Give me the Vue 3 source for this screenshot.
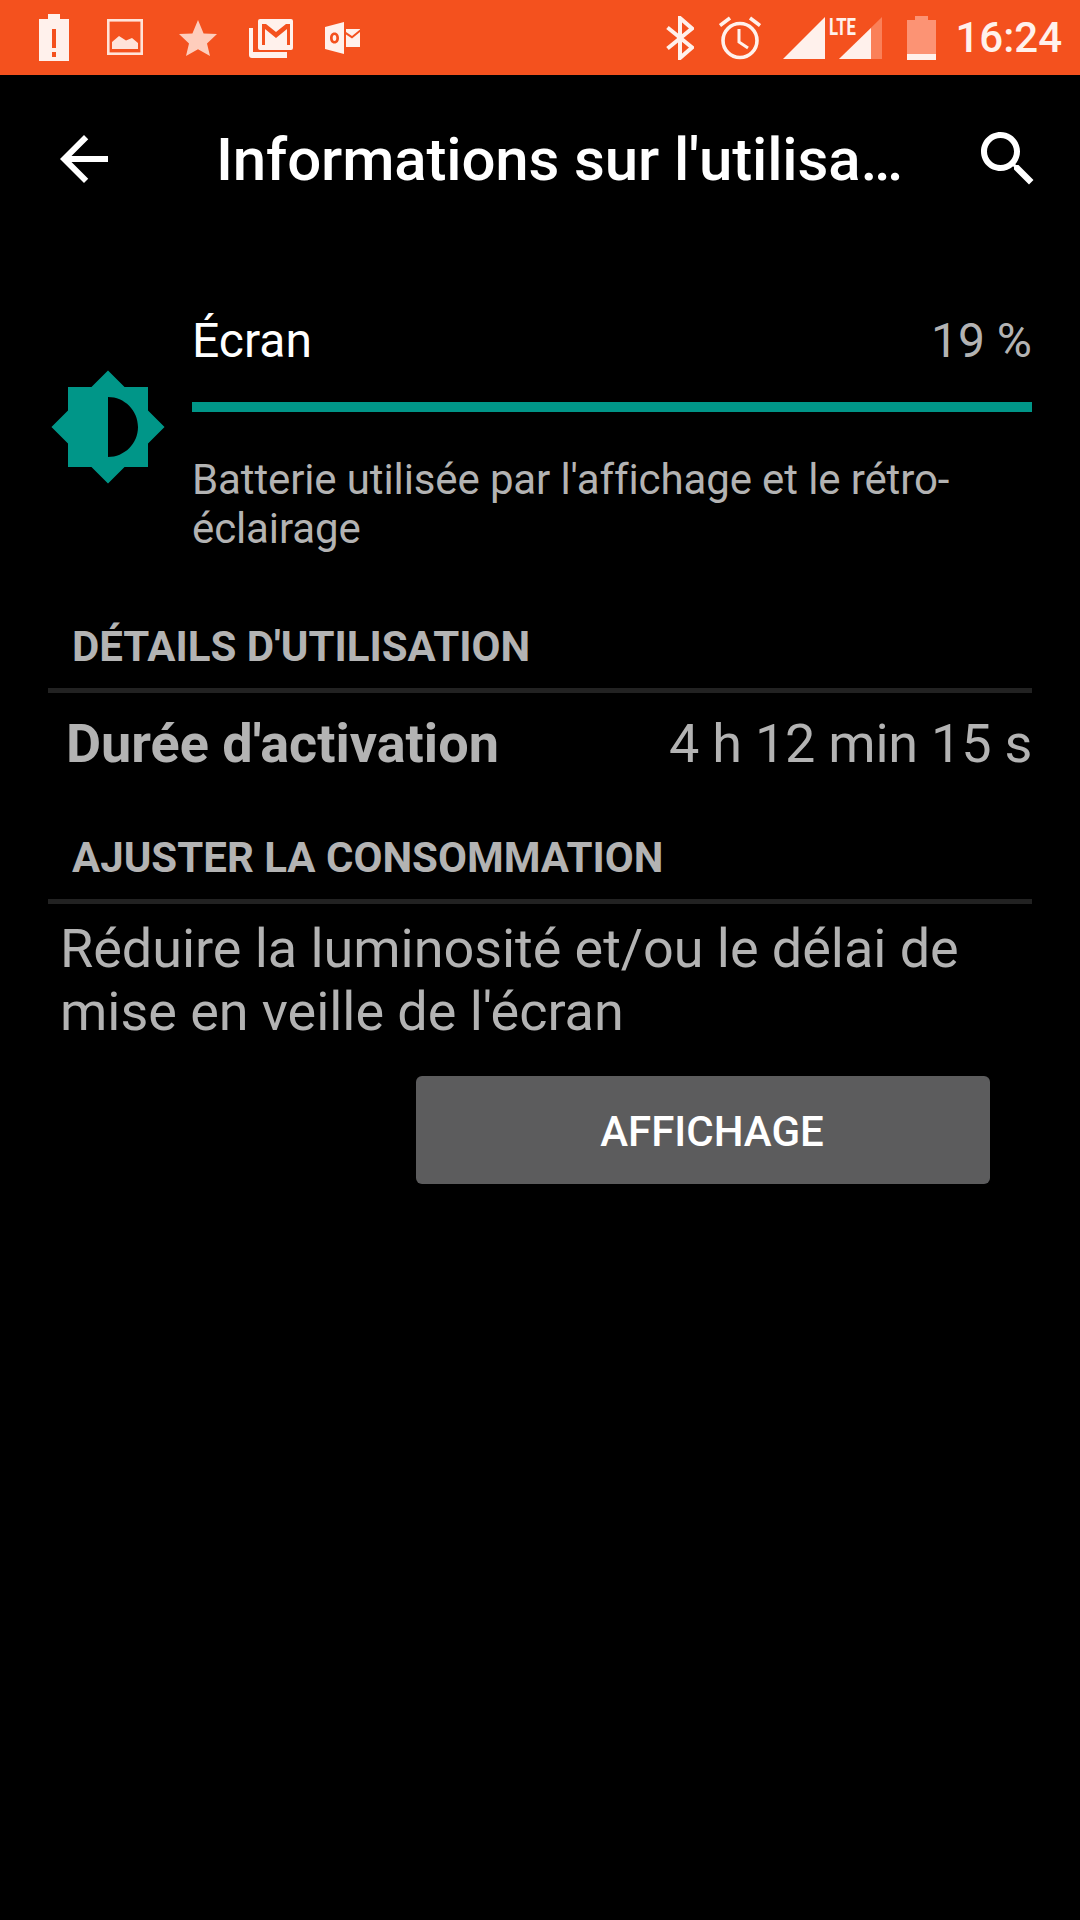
<template>
  <div class="screen">
    <div class="status-bar">
      <div class="status-left">
        <svg class="ic" width="30" height="47" viewBox="0 0 30 47">
          <path fill="#fff1ec" fill-rule="evenodd" d="M9 0h12v5h9v42H0V5h9zM13 15v19h4V15zM13 38v5h4v-5z" />
        </svg>
        <svg class="ic pic" width="36" height="36" viewBox="0 0 36 36">
          <rect x="1.300" y="1.300" width="33.400" height="33.400" fill="none" stroke="#ffe3d9" stroke-width="2.600" />
          <path fill="#ffe3d9" d="M5 30V23l7-6 7 4.500 6-2.500 6 5v6z" />
        </svg>
        <svg class="ic star" width="38" height="36" viewBox="0 0 38 36">
          <path fill="#fecdbc" d="M19 0l5.6 13.4L38 14l-10 9.4L31 36l-12-6.800L7 36l3-12.600L0 14l13.400-.6z" />
        </svg>
        <svg class="ic gmail" width="44" height="39" viewBox="0 0 44 39">
          <path fill="#fff1ec" fill-rule="evenodd" d="M11 0h31q2 0 2 2v27q0 2-2 2H11q-2 0-2-2V2q0-2 2-2zM13 5v21h3V10l11 9 11-9v16h3V5h-4L27 13 17 5z" />
          <path fill="#fff1ec" d="M0 9h4v24h34v6H3q-3 0-3-3z" />
        </svg>
        <svg class="ic outlook" width="35" height="32" viewBox="0 0 35 32">
          <path fill="#fff1ec" fill-rule="evenodd" d="M0 5L19 0v32L0 27zM9.500 10.500c-3 0-4.500 2.500-4.500 5.500s1.500 5.500 4.500 5.500S14 19 14 16s-1.500-5.500-4.500-5.500zM9.500 13c1.200 0 1.800 1.300 1.800 3s-.6 3-1.800 3-1.800-1.300-1.800-3 .6-3 1.800-3z" />
          <path fill="#fff1ec" d="M21 7h14v.6l-8 6.400-6-4zM21 12.500l6 4 8-6.500V25H21z" />
        </svg>
      </div>
      <div class="status-right">
        <svg class="ic bt" width="28" height="44" viewBox="0 0 28 44">
          <path fill="none" stroke="#fff1ec" stroke-width="4" d="M1.500 11.500L26 31.500 14 42V2l12 10.500L1.500 32.500" />
        </svg>
        <svg class="ic alarm" width="42" height="44" viewBox="0 0 42 44">
          <circle cx="21" cy="24.500" r="17" fill="none" stroke="#fff1ec" stroke-width="3.600" />
          <path fill="none" stroke="#fff1ec" stroke-width="3" d="M20 13v13l9 6" />
          <path fill="none" stroke="#fff1ec" stroke-width="3.600" d="M1 9.500L11 2M41 9.500L31 2" />
        </svg>
        <svg class="ic signal" width="99" height="48" viewBox="0 -5 99 48">
          <path fill="#fff1ec" d="M0 42L42 0v42z" />
          <path fill="#fa8058" d="M56 42L99 0v42z" />
          <path fill="#fff1ec" d="M56 42L88 11v31z" />
          <text x="46" y="18" class="lte" textLength="27" lengthAdjust="spacingAndGlyphs">LTE</text>
        </svg>
        <svg class="ic batt" width="29" height="44" viewBox="0 0 29 44">
          <path fill="#fc9374" d="M8 0h13v4h8v34H0V4h8z" />
          <path fill="#fff1ec" d="M0 38h29v6H0z" />
        </svg>
        <span class="clock">16:24</span>
      </div>
    </div>

    <div class="toolbar">
      <svg class="tool-icon back" width="72" height="72" viewBox="0 0 24 24">
        <path fill="#fff" d="M20 11H7.830l5.590-5.590L12 4l-8 8 8 8 1.410-1.410L7.830 13H20v-2z" />
      </svg>
      <div class="title">Informations sur l'utilisa…</div>
      <svg class="tool-icon search" width="72" height="72" viewBox="0 0 24 24">
        <path fill="#fff" d="M15.500 14h-.79l-.28-.27C15.410 12.590 16 11.110 16 9.500 16 5.910 13.090 3 9.500 3S3 5.910 3 9.500 5.910 16 9.500 16c1.610 0 3.090-.59 4.230-1.570l.27.28v.79l5 4.990L20.490 19l-4.990-5zm-6 0C7.010 14 5 11.990 5 9.500S7.010 5 9.500 5 14 7.010 14 9.500 11.990 14 9.500 14z" />
      </svg>
    </div>

    <div class="usage">
      <svg class="sun" width="120" height="120" viewBox="0 0 24 24">
        <path fill="#009688" fill-rule="evenodd" d="M20 8.690V4h-4.690L12 .69 8.690 4H4v4.690L.69 12 4 15.310V20h4.690L12 23.310 15.310 20H20v-4.690L23.310 12 20 8.690zM12 18V6c3.310 0 6 2.690 6 6s-2.690 6-6 6z" />
      </svg>
      <div class="usage-body">
        <div class="usage-head">
          <span class="usage-name">Écran</span>
          <span class="usage-pct">19 %</span>
        </div>
        <div class="bar"></div>
        <div class="usage-desc">Batterie utilisée par l'affichage et le rétro-éclairage</div>
      </div>
    </div>

    <div class="section">
      <div class="section-title">DÉTAILS D'UTILISATION</div>
      <div class="divider"></div>
    </div>
    <div class="detail-row">
      <span class="detail-label">Durée d'activation</span>
      <span class="detail-value">4 h 12 min 15 s</span>
    </div>

    <div class="section second">
      <div class="section-title">AJUSTER LA CONSOMMATION</div>
      <div class="divider"></div>
    </div>
    <div class="tip">Réduire la luminosité et/ou le délai de mise en veille de l'écran</div>
    <div class="action">
      <button class="action-btn">AFFICHAGE</button>
    </div>
  </div>
</template>

<script setup>
</script>

<style>
html,
body {
  margin: 0;
  background: #000;
}
</style>

<style scoped>
.screen {
  width: 1080px;
  height: 1920px;
  background: #000;
  font-family: Roboto, "Liberation Sans", sans-serif;
  overflow: hidden;
}

.status-bar {
  height: 75px;
  background: #f4511e;
  display: flex;
  justify-content: space-between;
  align-items: center;
}

.status-left,
.status-right {
  display: flex;
  align-items: center;
}

.status-left {
  padding-left: 39px;
}

.ic {
  display: block;
  flex: none;
}

.pic {
  margin-left: 38px;
  margin-top: -1px;
}

.star {
  margin-left: 36px;
  margin-top: 1px;
}

.gmail {
  margin-left: 32px;
  margin-top: 1px;
}

.outlook {
  margin-left: 32px;
  margin-top: 1px;
}

.status-right {
  padding-right: 18px;
}

.alarm {
  margin-left: 25px;
}

.signal {
  margin-left: 22px;
  margin-bottom: 3px;
}

.lte {
  font-family: Roboto, sans-serif;
  font-size: 24px;
  font-weight: 700;
  fill: #fff1ec;
}

.batt {
  margin-left: 25px;
}

.clock {
  margin-left: 19px;
  color: #fff1ec;
  font-size: 42px;
  font-weight: 500;
  line-height: 48px;
}

.toolbar {
  height: 168px;
  display: flex;
  align-items: center;
  padding: 0 36px 0 48px;
}

.tool-icon {
  flex: none;
  display: block;
}

.title {
  flex: 1;
  margin-left: 96px;
  color: #fff;
  font-size: 60px;
  font-weight: 500;
  letter-spacing: -0.14px;
  white-space: nowrap;
}

.usage {
  display: flex;
  align-items: flex-start;
  padding: 70px 48px 0 48px;
}

.sun {
  flex: none;
  margin-top: 54px;
}

.usage-body {
  flex: 1;
  margin-left: 24px;
}

.usage-head {
  display: flex;
  justify-content: space-between;
  align-items: baseline;
  line-height: 56px;
}

.usage-name {
  color: #fff;
  font-size: 48px;
}

.usage-pct {
  color: #b3b3b3;
  font-size: 48px;
}

.bar {
  height: 10px;
  margin-top: 33px;
  background: #009688;
}

.usage-desc {
  margin-top: 43px;
  color: #b3b3b3;
  font-size: 42px;
  letter-spacing: -0.12px;
  line-height: 49px;
}

.section {
  margin: 69px 48px 0;
}

.section.second {
  margin-top: 54px;
}

.section-title {
  padding-left: 24px;
  color: #b3b3b3;
  font-size: 42px;
  font-weight: 700;
  line-height: 49px;
}

.divider {
  height: 5px;
  margin-top: 17px;
  background: #222;
}

.detail-row {
  display: flex;
  justify-content: space-between;
  align-items: baseline;
  margin-top: 16px;
  padding: 0 48px 0 66px;
  line-height: 70px;
}

.detail-label {
  color: #b3b3b3;
  font-size: 54px;
  font-weight: 700;
}

.detail-value {
  color: #b3b3b3;
  font-size: 54px;
  letter-spacing: -0.25px;
}

.tip {
  margin-top: 13px;
  padding: 0 60px;
  color: #b3b3b3;
  font-size: 54px;
  letter-spacing: -0.05px;
  line-height: 63px;
}

.action {
  display: flex;
  justify-content: flex-end;
  padding-right: 90px;
  margin-top: 33px;
}

.action-btn {
  width: 574px;
  height: 108px;
  border: none;
  border-radius: 6px;
  background: #5c5c5d;
  color: #fff;
  font-family: inherit;
  font-size: 42px;
  font-weight: 500;
  padding: 3px 0 0 18px;
}
</style>
